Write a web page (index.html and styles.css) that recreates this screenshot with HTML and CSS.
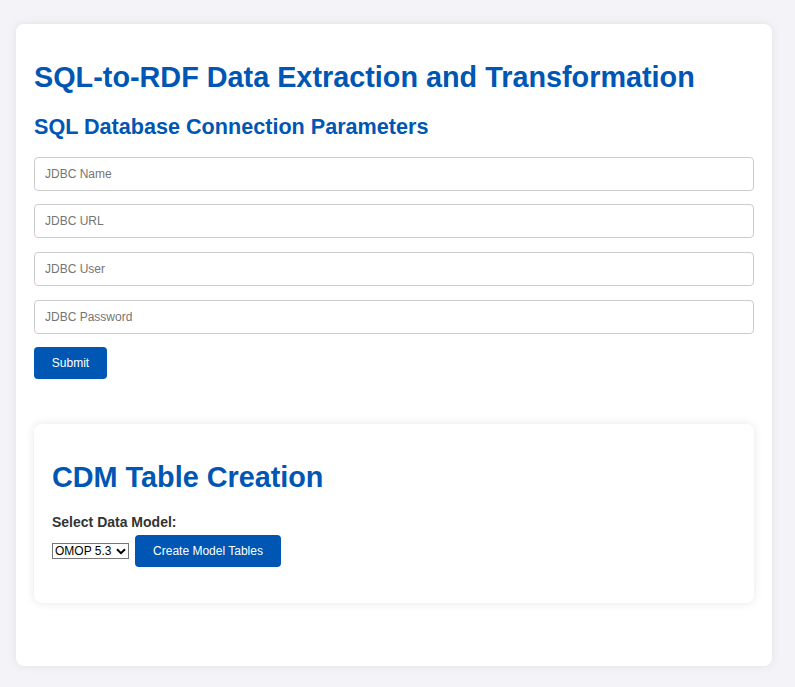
FILE: index.html
```html
<!DOCTYPE html>
<html>
<head>
<meta charset="utf-8">
<link rel="stylesheet" href="styles.css">
</head>
<body>
<div class="container">
  <h1 class="title">SQL-to-RDF Data Extraction and Transformation</h1>
  <h2 class="subtitle">SQL Database Connection Parameters</h2>
  <form class="form">
    <input class="field" type="text" placeholder="JDBC Name">
    <input class="field" type="text" placeholder="JDBC URL">
    <input class="field" type="text" placeholder="JDBC User">
    <input class="field" type="password" placeholder="JDBC Password">
    <button class="btn btn-submit" type="button">Submit</button>
  </form>
  <div class="card">
    <h1 class="card-title">CDM Table Creation</h1>
    <label class="label">Select Data Model:</label>
    <div class="row">
      <span class="select-wrap">
        <select class="select"><option>OMOP 5.3</option></select>
        <svg class="chevron" width="10" height="7" viewBox="0 0 10 7"><path d="M1 1.2 L5 5.2 L9 1.2" fill="none" stroke="#000" stroke-width="2"/></svg>
      </span>
      <button class="btn btn-create" type="button">Create Model Tables</button>
    </div>
  </div>
</div>
</body>
</html>
```
FILE: styles.css
```css
html, body { margin: 0; padding: 0; }
body {
  background: #f3f3f8;
  font-family: "Liberation Sans", Arial, sans-serif;
  padding: 24px 23px 21px 16px;
}
.container {
  background: #fff;
  border-radius: 8px;
  box-shadow: 0 0 10px rgba(0,0,0,0.08);
  padding: 18px 18px 63px 18px;
}
.title {
  color: #0056b3;
  font-size: 28.8px;
  font-weight: bold;
  margin: 19px 0 0 0;
  line-height: 33px;
}
.subtitle {
  color: #0056b3;
  font-size: 21.6px;
  font-weight: bold;
  margin: 20px 0 0 0;
  line-height: 25px;
}
.form {
  display: flex;
  flex-direction: column;
  align-items: flex-start;
  margin-top: 17.5px;
}
.field {
  box-sizing: border-box;
  width: 100%;
  height: 34px;
  border: 1px solid #ccc;
  border-radius: 4px;
  padding: 0 10px;
  font-family: "Liberation Sans", Arial, sans-serif;
  font-size: 12px;
  margin-bottom: 13.7px;
}
.field::placeholder { color: #757575; }
.btn {
  background: #0056b3;
  color: #fff;
  border: none;
  border-radius: 4px;
  font-family: "Liberation Sans", Arial, sans-serif;
  font-size: 12px;
  cursor: pointer;
}
.btn-submit {
  width: 73px;
  height: 32px;
  margin-top: 0;
}
.card {
  margin-top: 45px;
  background: #fff;
  border-radius: 8px;
  box-shadow: 0 0 10px rgba(0,0,0,0.1);
  padding: 18px 18px 36px 18px;
}
.card-title {
  color: #0056b3;
  font-size: 28.8px;
  font-weight: bold;
  margin: 19px 0 0 0;
  line-height: 33px;
}
.label {
  display: block;
  font-weight: bold;
  font-size: 14px;
  line-height: 16px;
  color: #333;
  margin-top: 20px;
}
.row {
  display: flex;
  align-items: center;
  margin-top: 5px;
}
.select-wrap {
  position: relative;
  display: inline-block;
  height: 16px;
}
.select {
  -webkit-appearance: none;
  appearance: none;
  box-sizing: border-box;
  font-family: "Liberation Sans", Arial, sans-serif;
  font-size: 12px;
  width: 77px;
  height: 16px;
  line-height: 14px;
  padding: 0 16px 0 2px;
  border: 1px solid #767676;
  border-radius: 0;
  background: #fff;
  color: #000;
  display: block;
}
.chevron {
  position: absolute;
  right: 3px;
  top: 5px;
  pointer-events: none;
}
.btn-create {
  width: 146px;
  height: 32px;
  margin-left: 6px;
}
```
